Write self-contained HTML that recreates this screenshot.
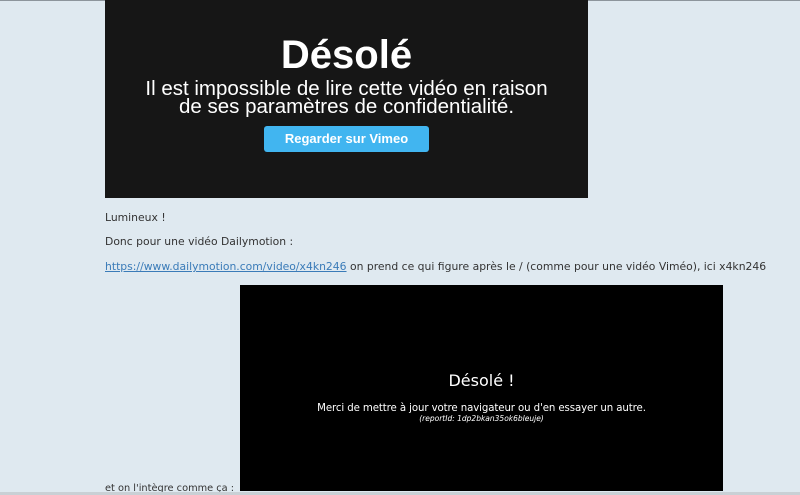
<!DOCTYPE html>
<html><head><meta charset="utf-8"><style>
html,body{margin:0;padding:0;width:800px;height:495px;overflow:hidden;background:#dfe9f0;font-family:"DejaVu Sans","Liberation Sans",sans-serif;}
.topl{position:absolute;left:0;top:0;width:800px;height:1px;background:#8d959c}
.botl{position:absolute;left:0;top:492px;width:800px;height:3px;background:#c9d0d5}
.vim{position:absolute;left:105px;top:0;width:483px;height:198px;background:#161616;color:#fff;text-align:center;font-family:"Liberation Sans",sans-serif}
.vim h1{position:absolute;top:35px;left:0;right:0;margin:0;font-size:40px;font-weight:bold;line-height:40px}
.vim p{position:absolute;top:80px;left:0;right:0;margin:0;font-size:20.5px;line-height:18px}
.btn{position:absolute;left:159px;top:126px;width:165px;height:26px;background:#41b5f0;border-radius:3px;font-size:13px;font-weight:bold;line-height:26px}
.t{position:absolute;left:105px;font-size:10.8px;color:#333;white-space:nowrap}
a{color:#3a7bb8;text-decoration:underline}
.dm{position:absolute;left:240px;top:285px;width:483px;height:206px;background:#000;color:#fff;text-align:center}
.dm .h{position:absolute;top:86px;left:0;right:0;font-size:16px}
.dm .m{position:absolute;top:118px;left:0;right:0;font-size:10.2px;letter-spacing:-0.1px}
.dm .r{position:absolute;top:129px;left:0;right:0;font-size:7.5px;font-style:italic}
</style></head><body>
<div class="topl"></div>
<div class="vim"><h1>Désolé</h1><p>Il est impossible de lire cette vidéo en raison<br>de ses paramètres de confidentialité.</p><div class="btn">Regarder sur Vimeo</div></div>
<div class="t" style="top:211px">Lumineux !</div>
<div class="t" style="top:235px">Donc pour une vidéo Dailymotion :</div>
<div class="t" style="top:260px"><a>https://www.dailymotion.com/video/x4kn246</a> on prend ce qui figure après le / (comme pour une vidéo Viméo), ici x4kn246</div>
<div class="dm"><div class="h">Désolé !</div><div class="m">Merci de mettre à jour votre navigateur ou d'en essayer un autre.</div><div class="r">(reportId: 1dp2bkan35ok6bleuje)</div></div>
<div class="t" style="top:483px;font-size:9.8px">et on l'intègre comme ça :</div>
<div class="botl"></div>
</body></html>
